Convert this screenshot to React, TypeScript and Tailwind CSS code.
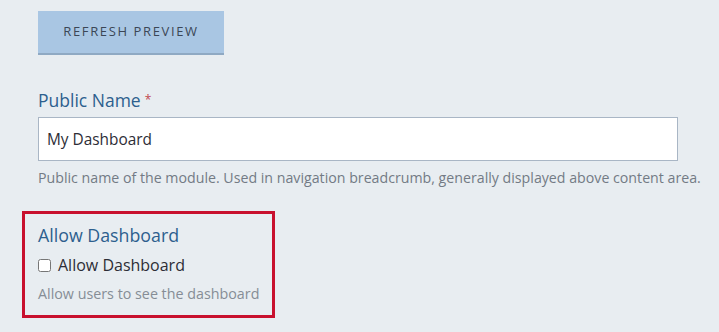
export default function App() {
  return (
    <div className="min-h-[332px] w-[719px] bg-[#e8edf1] font-['Open_Sans',sans-serif] pl-[38px] pt-[11px]">
      <button className="h-[44px] w-[186px] bg-[#a9c6e3] border-b-2 border-[#8fa9c3] text-[13px] tracking-[0.125em] text-[#3b4656]">
        REFRESH PREVIEW
      </button>

      <div className="mt-[32px]">
        <label className="block text-[17.5px] leading-[26px] text-[#2d5f8e]">
          Public Name<span className="ml-[4px] text-[12px] text-[#c0474f] align-top">*</span>
        </label>
        <input
          defaultValue="My Dashboard"
          className="mt-[4px] h-[44px] w-[640px] border border-[#a9b6c5] bg-white px-[8px] text-[15.4px] text-[#2d2d36] outline-none"
        />
        <p className="mt-[6px] text-[14.2px] leading-[22px] text-[#737b85]">
          Public name of the module. Used in navigation breadcrumb, generally displayed above content area.
        </p>
      </div>

      <div className="-ml-[16px] mt-[22px] w-[253px] border-[3px] border-[#c8102e] pl-[13px] pt-[8px] pb-[10px]">
        <h3 className="text-[17.8px] leading-[26px] text-[#2d5f8e]">Allow Dashboard</h3>
        <label className="mt-[5px] flex items-center gap-[7px] text-[16px] leading-[24px] text-[#2d2d36]">
          <input type="checkbox" className="h-[13px] w-[13px] m-0" />
          Allow Dashboard
        </label>
        <p className="mt-[6px] text-[14.3px] leading-[22px] text-[#868d96]">Allow users to see the dashboard</p>
      </div>
    </div>
  );
}
